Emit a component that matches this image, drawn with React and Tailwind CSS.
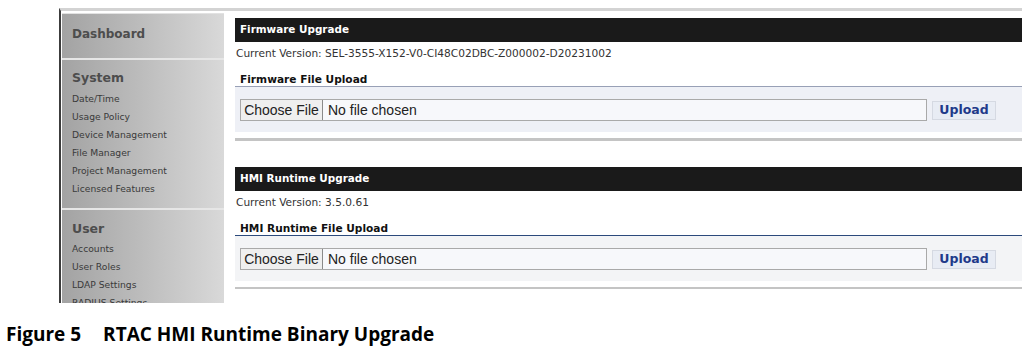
const verdana = { fontFamily: '"DejaVu Sans", Verdana, sans-serif' }

const systemItems = ['Date/Time', 'Usage Policy', 'Device Management', 'File Manager', 'Project Management', 'Licensed Features']
const userItems = ['Accounts', 'User Roles', 'LDAP Settings', 'RADIUS Settings']

function Sidebar() {
  return (
    <div className="w-[162px] shrink-0 mt-[2px] ml-px bg-gradient-to-r from-[#a3a3a3] via-[#bdbdbd] to-[#d9d9d9] border-t border-[#e2e2e2] text-[#3a3a3a]" style={verdana}>
      <div className="h-[44px] pt-[12px] pl-[10px]">
        <div className="text-[12px] leading-[16px] font-bold text-[#4d4d4d]">Dashboard</div>
      </div>
      <div className="h-[2px] bg-[#e6e6e6]" />
      <div className="pt-[10px] pl-[10px]">
        <div className="text-[12.5px] leading-[16px] font-bold text-[#4d4d4d]">System</div>
        <div className="mt-[4px]">
          {systemItems.map(t => (
            <div key={t} className="text-[9.2px] leading-[18px]">{t}</div>
          ))}
        </div>
      </div>
      <div className="mt-[10px] h-[2px] bg-[#e6e6e6]" />
      <div className="pt-[11px] pl-[10px]">
        <div className="text-[12.5px] leading-[16px] font-bold text-[#4d4d4d]">User</div>
        <div className="mt-[3px]">
          {userItems.map(t => (
            <div key={t} className="text-[9.2px] leading-[18px]">{t}</div>
          ))}
        </div>
      </div>
    </div>
  )
}

function FileRow() {
  return (
    <div className="flex items-center pl-[5px]">
      <div className="w-[687px] h-[22px] flex items-stretch border border-[#a9a9a9] bg-[#f7f8fb]" style={{ fontFamily: '"Liberation Sans", Arial, sans-serif' }}>
        <div className="w-[82px] flex items-center justify-center bg-[#efefef] border-r border-[#8a8a8a] text-[14px] text-[#222]">Choose File</div>
        <div className="pl-[5px] flex items-center text-[14px] text-[#222]">No file chosen</div>
      </div>
      <div className="ml-[5px] w-[64px] h-[19px] flex items-center justify-center bg-[#e8ecf4] border border-[#d5d9e2] text-[12.5px] font-bold text-[#1f3a8a]" style={verdana}>Upload</div>
    </div>
  )
}

function Section({ title, version, upload, top, line, panel, bar }) {
  return (
    <div className={top}>
      <div className="h-[24px] bg-[#1a1a1a] flex items-center pl-[5px] text-[10.4px] font-bold text-white">{title}</div>
      <div className="mt-[4px] pl-px text-[10.6px] leading-[14px] text-[#333]">Current Version: {version}</div>
      <div className={`mt-[12px] pl-[5px] text-[10.6px] leading-[14px] font-bold text-[#111] border-b ${line}`}>{upload}</div>
      <div className={`${panel} pt-[12px] pb-[11px]`}>
        <FileRow />
      </div>
      <div className={`mt-[6px] ${bar} bg-[#c4c4c4]`} />
    </div>
  )
}

export default function App() {
  return (
    <div className="w-[1032px] h-[349px] bg-white overflow-hidden">
      <div className="ml-[59px] mt-[8px] w-[963px] h-[295px] flex overflow-hidden border-l-2 border-l-[#3c3c3c] border-t-[3px] border-t-[#d3d3d3]">
        <Sidebar />
        <div className="ml-[11px] flex-1 pt-[7px]" style={verdana}>
          <Section
            title="Firmware Upgrade"
            version="SEL-3555-X152-V0-CI48C02DBC-Z000002-D20231002"
            upload="Firmware File Upload"
            top=""
            line="border-[#98a0b6]"
            panel="bg-[#eef0f6]"
            bar="h-[3px]"
          />
          <Section
            title="HMI Runtime Upgrade"
            version="3.5.0.61"
            upload="HMI Runtime File Upload"
            top="mt-[26px]"
            line="border-[#2c4a7c]"
            panel="bg-[#f3f4f6]"
            bar="h-[2px]"
          />
        </div>
      </div>
      <div className="mt-[19px] pl-[6px] flex text-[19px] leading-[24px] font-bold text-black" style={{ fontFamily: '"Open Sans", "Liberation Sans", sans-serif' }}>
        <span>Figure 5</span>
        <span className="ml-[22px]">RTAC HMI Runtime Binary Upgrade</span>
      </div>
    </div>
  )
}
